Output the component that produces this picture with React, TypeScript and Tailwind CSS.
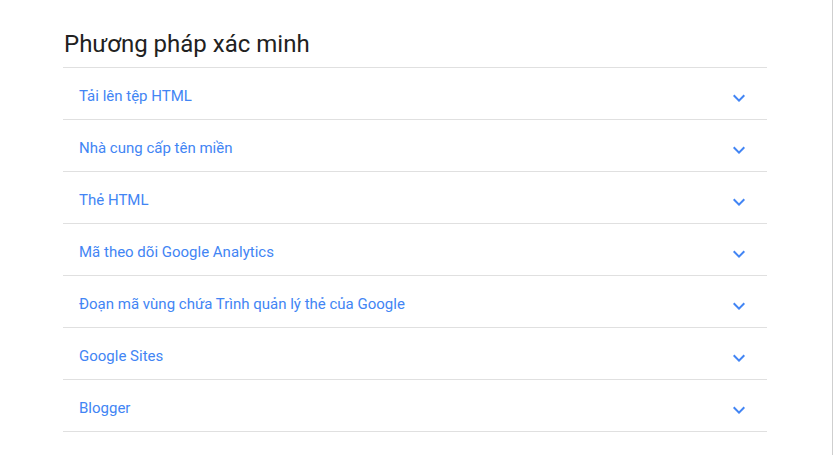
const methods = [
  "Tải lên tệp HTML",
  "Nhà cung cấp tên miền",
  "Thẻ HTML",
  "Mã theo dõi Google Analytics",
  "Đoạn mã vùng chứa Trình quản lý thẻ của Google",
  "Google Sites",
  "Blogger",
]

function ExpandIcon() {
  return (
    <svg width="24" height="24" viewBox="0 0 24 24" className="shrink-0 fill-[#4285f4]">
      <path d="M16.59 8.59L12 13.17 7.41 8.59 6 10l6 6 6-6z" />
    </svg>
  )
}

function MethodRow({ label }: { label: string }) {
  return (
    <div className="flex h-[52px] items-start justify-between border-b border-[#e0e0e0] px-4 pt-[18px]">
      <span className="text-[15px] leading-5 text-[#4285f4]">{label}</span>
      <ExpandIcon />
    </div>
  )
}

export default function App() {
  return (
    <div className="flex h-[455px] w-full bg-white font-['Roboto',sans-serif]">
      <div className="flex-1 pl-[63px] pr-[65px] pt-[30px]">
        <h1 className="mb-[9px] pl-px text-[24px] leading-[28px] font-normal text-[#212121]">
          Phương pháp xác minh
        </h1>
        <div className="border-t border-[#e0e0e0]">
          {methods.map((m) => (
            <MethodRow key={m} label={m} />
          ))}
        </div>
      </div>
      <div className="w-px bg-[#cfcfcf]" />
    </div>
  )
}
